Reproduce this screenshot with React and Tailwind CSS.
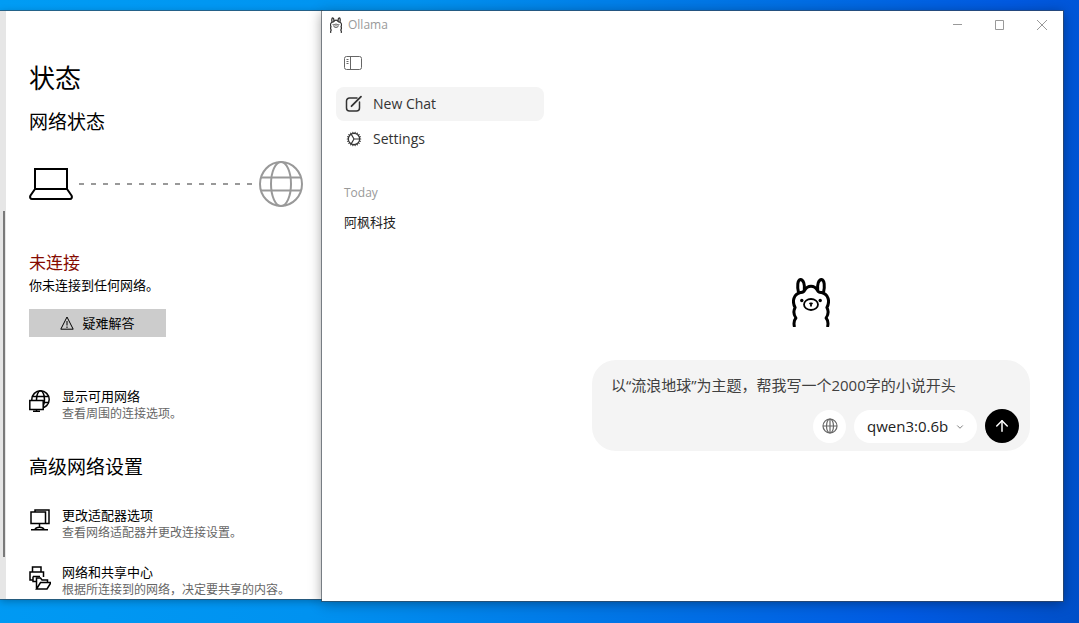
import { HiOutlineCog } from "react-icons/hi2"
import { ArrowUp, ChevronDown } from "lucide-react"

const settingsFont = "font-['Noto_Sans_CJK_SC',sans-serif]"
const chatFont = "font-['Open_Sans','Noto_Sans_CJK_SC',sans-serif]"

function Llama({ className, strokeWidth = 3 }) {
  return (
    <svg viewBox="0 0 38 50" className={className} fill="none" stroke="currentColor" strokeWidth={strokeWidth} strokeLinecap="butt" strokeLinejoin="round">
      <path d="M2.500 50c-.9-3.500-.3-7 1.400-9-2.200-3.200-2.700-7-.8-10.500C0 25 1.200 17 8.500 15.500c1.900.2 3.300-.6 4.300-2.400 2.700-5 9.700-5 12.400 0 1 1.800 2.400 2.600 4.300 2.400 7.300 1.500 8.500 9.500 5.400 15 1.900 3.500 1.400 7.300-.8 10.500 1.700 2 2.300 5.500 1.400 9" />
      <path d="M6.500 15.500C5 9 5.500 3 8.500 2.500c3 .2 4.500 5.200 3.800 11M31.500 15.500c1.500-6.500 1-12.500-2-13-3 .2-4.500 5.200-3.800 11" />
      <ellipse cx="19" cy="27.500" rx="7" ry="5.500" strokeWidth={strokeWidth * 0.6} />
      <path d="M17.500 26 19 27.100l1.500-1.100M19 27.100v2.400" strokeWidth={strokeWidth * 0.6} />
      <circle cx="9.800" cy="23.500" r="1.700" fill="currentColor" stroke="none" />
      <circle cx="28.200" cy="23.500" r="1.700" fill="currentColor" stroke="none" />
    </svg>
  )
}

function Laptop() {
  return (
    <svg viewBox="0 0 44 32" className="h-8 w-11 shrink-0" fill="none" stroke="currentColor" strokeWidth="2">
      <path d="M6 1h32v20H6zM6 21l-4.500 6.500c-1 2 0 3.500 1.500 3.500h38c1.500 0 2.500-1.500 1.500-3.500L38 21" />
    </svg>
  )
}

function BigGlobe() {
  return (
    <svg viewBox="0 0 44 46" className="h-[46px] w-11 shrink-0" fill="none" stroke="#999" strokeWidth="2">
      <ellipse cx="22" cy="23" rx="21" ry="22" />
      <ellipse cx="22" cy="23" rx="10" ry="22" />
      <path d="M2 16.500h40M2 29.500h40" />
    </svg>
  )
}

function NetworkIcon() {
  return (
    <svg viewBox="0 0 22 22" className="size-[22px]" fill="none" stroke="currentColor" strokeWidth="1.500">
      <circle cx="11.500" cy="9.500" r="8.700" />
      <ellipse cx="11.500" cy="9.500" rx="4" ry="8.700" />
      <path d="M3.500 6.500h16M3.500 12.500h16" />
      <path d="M.8 10.500h13.400v9H.8z" fill="white" />
      <path d="M7.500 19.500v2M4 21.300h7" />
    </svg>
  )
}

function AdapterIcon() {
  return (
    <svg viewBox="0 0 22 22" className="size-[22px]" fill="none" stroke="currentColor" strokeWidth="1.500">
      <path d="M6 3V1h14v13.500h-3" />
      <path d="M2 3h14.500v11.500H2zM10.500 14.500v3M2 20.800h17M6 20.500c1-3 8-3 9 0" />
    </svg>
  )
}

function SharingIcon() {
  return (
    <svg viewBox="0 0 22 24" className="h-6 w-[22px]" fill="none" stroke="currentColor" strokeWidth="1.500">
      <path d="M3.500 6V1h8.500v5M4 14H1V6h13.500v5M4 10.500h7M4 10.500v5h3" />
      <path d="M7.500 23V12h4l1.500 2h5.500v2.500M7.500 23l4-6.500H22L18 23z" fill="white" />
    </svg>
  )
}

function WarningIcon() {
  return (
    <svg viewBox="0 0 14 14" className="size-3.5" fill="none" stroke="currentColor">
      <path d="M7 1 .8 13.200h12.400zM7 5v4.500M7 10.500V12" />
    </svg>
  )
}

function SidebarIcon() {
  return (
    <svg viewBox="0 0 18 14" className="h-3.5 w-[18px]" fill="none" stroke="currentColor">
      <rect x=".5" y=".5" width="17" height="13" rx="2" />
      <path d="M6.500 1v12M2.500 3.500h2M2.500 5.500h2M2.500 7.500h2" />
    </svg>
  )
}

function NewChatIcon() {
  return (
    <svg viewBox="0 0 18 18" className="size-[18px] shrink-0" fill="none" stroke="currentColor" strokeWidth="1.500" strokeLinecap="round">
      <path d="M12 3H4.500a3 3 0 0 0-3 3v7a3 3 0 0 0 3 3h7a3 3 0 0 0 3-3V7" />
      <path d="M6.500 11.200 16 1.700" strokeWidth="1.800" />
    </svg>
  )
}

function WebIcon() {
  return (
    <svg viewBox="0 0 16 16" className="size-4" fill="none" stroke="currentColor" strokeWidth="1.200">
      <circle cx="8" cy="8" r="7" />
      <ellipse cx="8" cy="8" rx="3.500" ry="7" />
      <path d="M8 1v14M1 8h14" />
    </svg>
  )
}

function SettingLink({ icon, title, description, className }) {
  return (
    <a href="#" className={`flex gap-[11px] ${className}`}>
      <span className="flex w-[22px] shrink-0 pt-0.5">{icon}</span>
      <span className="whitespace-nowrap">
        <span className="block text-[13px] leading-4 text-black">{title}</span>
        <span className="block text-xs leading-[18px] text-[#666]">{description}</span>
      </span>
    </a>
  )
}

function NetworkSettings() {
  return (
    <section className={`mb-0.5 flex w-[322px] shrink-0 overflow-hidden bg-white text-black shadow-[0_0_0_1px_rgba(60,70,80,0.6),0_2px_8px_rgba(0,0,0,0.3)] ${settingsFont}`}>
      <div className="flex w-1.5 shrink-0 flex-col items-end bg-[#e6e6e6] pr-px">
        <div className="grow-[200]" />
        <div className="w-0.5 grow-[346] bg-[#7a7a7a]" />
        <div className="grow-[42]" />
      </div>
      <div className="min-w-0 grow pt-[50px] pr-[19px] pl-[23px]">
        <h1 className="text-[26px] leading-8">状态</h1>
        <h2 className="mt-4 text-[19px] leading-6">网络状态</h2>
        <div className="mt-7 flex items-center">
          <Laptop />
          <svg className="mx-1.5 h-0.5 min-w-0 grow" stroke="#999" strokeWidth="2">
            <line x1="0" y1="1" x2="100%" y2="1" strokeDasharray="5 7" />
          </svg>
          <BigGlobe />
        </div>
        <p className="mt-[43px] text-[17px] leading-6 text-[#850a00]">未连接</p>
        <p className="text-[13px] leading-[22px]">你未连接到任何网络。</p>
        <button className="mt-[13px] flex h-7 w-[137px] items-center justify-center gap-2 bg-[#ccc] text-[13px]">
          <WarningIcon />
          疑难解答
        </button>
        <SettingLink className="mt-[51px]" icon={<NetworkIcon />} title="显示可用网络" description="查看周围的连接选项。" />
        <h2 className="mt-8 text-[19px] leading-6">高级网络设置</h2>
        <SettingLink className="mt-[29px]" icon={<AdapterIcon />} title="更改适配器选项" description="查看网络适配器并更改连接设置。" />
        <SettingLink className="mt-[23px]" icon={<SharingIcon />} title="网络和共享中心" description="根据所连接到的网络，决定要共享的内容。" />
      </div>
    </section>
  )
}

function TitleBar() {
  return (
    <header className="flex h-7 items-center justify-between pl-2 text-[#999]">
      <div className="flex items-center gap-1.5">
        <Llama className="h-4 w-3 text-[#333]" strokeWidth={4} />
        <span className="text-xs">Ollama</span>
      </div>
      <div className="flex">
        <button aria-label="Minimize" className="flex w-[42px] justify-center">
          <svg viewBox="0 0 10 10" className="size-2.5" stroke="currentColor"><path d="M0 4.500h9" /></svg>
        </button>
        <button aria-label="Maximize" className="flex w-[42px] justify-center">
          <svg viewBox="0 0 10 10" className="size-2.5" stroke="currentColor" fill="none"><path d="M.5.500h8v9h-8z" /></svg>
        </button>
        <button aria-label="Close" className="flex w-[42px] justify-center">
          <svg viewBox="0 0 10 10" className="size-2.5" stroke="currentColor"><path d="m0 0 10 10M10 0 0 10" /></svg>
        </button>
      </div>
    </header>
  )
}

function Sidebar() {
  return (
    <aside className="flex w-[237px] shrink-0 flex-col px-3.5 pt-4">
      <button aria-label="Toggle sidebar" className="ml-2 flex h-4 w-5 items-center text-[#666]">
        <SidebarIcon />
      </button>
      <nav className="mt-4 flex w-[208px] flex-col gap-px text-sm text-[#333]">
        <a href="#" className="flex h-[34px] items-center gap-2.5 rounded-lg bg-[#f4f4f4] px-[9px]">
          <NewChatIcon />
          New Chat
        </a>
        <a href="#" className="flex h-[34px] items-center gap-2.5 rounded-lg px-[9px]">
          <HiOutlineCog className="size-[18px]" />
          Settings
        </a>
      </nav>
      <h3 className="mt-[29px] ml-2 text-xs leading-4 text-[#999]">Today</h3>
      <a href="#" className="mt-[11px] ml-2 text-[13px] leading-5 text-[#222]">阿枫科技</a>
    </aside>
  )
}

function Composer() {
  return (
    <form className="mt-[33px] h-[91px] w-full rounded-3xl bg-[#f4f4f4] pt-3 pr-[11px] pl-[19px]" onSubmit={(e) => e.preventDefault()}>
      <input
        aria-label="Message"
        defaultValue="以“流浪地球”为主题，帮我写一个2000字的小说开头"
        className="block h-6 w-full bg-transparent text-[15px] text-[#404040] outline-none"
      />
      <div className="mt-[13px] flex items-center justify-end gap-2">
        <button type="button" aria-label="Web search" className="flex size-[33px] items-center justify-center rounded-full bg-white text-[#666]">
          <WebIcon />
        </button>
        <div className="relative">
          <select aria-label="Model" className="block h-[33px] w-[123px] appearance-none rounded-full bg-white pl-[13px] text-[15px] text-[#222]">
            <option>qwen3:0.6b</option>
          </select>
          <ChevronDown className="pointer-events-none absolute top-3 right-3 size-2.5 text-[#666]" />
        </div>
        <button type="submit" aria-label="Send" className="flex size-[34px] items-center justify-center rounded-full bg-black text-white">
          <ArrowUp className="size-[18px]" strokeWidth={2} />
        </button>
      </div>
    </form>
  )
}

function OllamaWindow() {
  return (
    <section className={`relative flex min-w-0 grow flex-col bg-white shadow-[0_0_0_1px_rgba(60,70,80,0.6),0_2px_12px_rgba(0,0,0,0.4)] ${chatFont}`}>
      <TitleBar />
      <div className="flex min-h-0 grow">
        <Sidebar />
        <main className="flex min-w-0 grow flex-col items-center justify-center px-[33px] pt-[88px]">
          <Llama className="h-[50px] w-[38px] text-black" />
          <Composer />
        </main>
      </div>
    </section>
  )
}

export default function App() {
  return (
    <div className="flex h-screen overflow-hidden bg-linear-[100deg,#009cf4_0%,#0092f0_35%,#0074e6_62%,#005ae2_85%,#004fc8_100%] pt-[11px] pr-4 pb-[22px]">
      <NetworkSettings />
      <OllamaWindow />
    </div>
  )
}
